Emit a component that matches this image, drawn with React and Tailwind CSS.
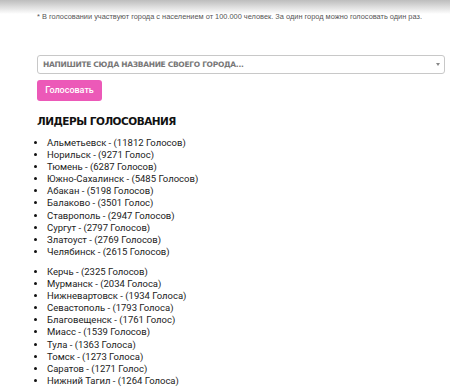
import React from 'react';

const first = [
  'Альметьевск - (11812 Голосов)',
  'Норильск - (9271 Голос)',
  'Тюмень - (6287 Голосов)',
  'Южно-Сахалинск - (5485 Голосов)',
  'Абакан - (5198 Голосов)',
  'Балаково - (3501 Голос)',
  'Ставрополь - (2947 Голосов)',
  'Сургут - (2797 Голосов)',
  'Златоуст - (2769 Голосов)',
  'Челябинск - (2615 Голосов)',
];

const second = [
  'Керчь - (2325 Голосов)',
  'Мурманск - (2034 Голоса)',
  'Нижневартовск - (1934 Голоса)',
  'Севастополь - (1793 Голоса)',
  'Благовещенск - (1761 Голос)',
  'Миасс - (1539 Голосов)',
  'Тула - (1363 Голоса)',
  'Томск - (1273 Голоса)',
  'Саратов - (1271 Голос)',
  'Нижний Тагил - (1264 Голоса)',
];

// one block of leaders
const Leaders = ({ items }) => (
  <ul className="list-disc pl-[10px] marker:text-[#111]">
    {items.map((t) => (
      <li key={t} className="h-[12.1px] leading-[12.1px]">{t}</li>
    ))}
  </ul>
);

export default function App() {
  return (
    <div className="w-[450px] h-[389px] overflow-hidden bg-white relative font-['Roboto',sans-serif]">
      {/* top shadow */}
      <div className="absolute top-0 left-0 right-0 h-[14px] bg-gradient-to-b from-[#bdbdbd] to-white" />
      <div className="relative pl-[37px] pr-[5px] pt-[12px]">
        <p className="text-[7.4px] leading-[9px] text-[#555] font-['Liberation_Sans',sans-serif] whitespace-nowrap">
          * В голосовании участвуют города с населением от 100.000 человек. За один город можно голосовать один раз.
        </p>

        <div className="mt-[34px] h-[19px] border border-[#c8c8c8] rounded-[3px] flex items-center justify-between pl-[5px] pr-[4px]">
          <span className="text-[7.5px] font-bold text-[#777] uppercase tracking-[-0.3px] font-['DejaVu_Sans',sans-serif]">Напишите сюда название своего города...</span>
          <span className="w-0 h-0 border-l-[2.5px] border-r-[2.5px] border-t-[3px] border-l-transparent border-r-transparent border-t-[#888]" />
        </div>

        <button className="mt-[6px] w-[65px] h-[21px] rounded-[3px] bg-[#ec59b8] text-white text-[9px] font-medium">
          Голосовать
        </button>

        <h2 className="mt-[14px] text-[10.5px] leading-[13px] font-bold uppercase text-[#111] tracking-[-0.5px] font-['DejaVu_Sans',sans-serif]">
          Лидеры голосования
        </h2>

        <div className="mt-[9px] text-[9.5px] text-[#222]">
          <Leaders items={first} />
          <div className="h-[8px]" />
          <Leaders items={second} />
        </div>
      </div>
    </div>
  );
}
